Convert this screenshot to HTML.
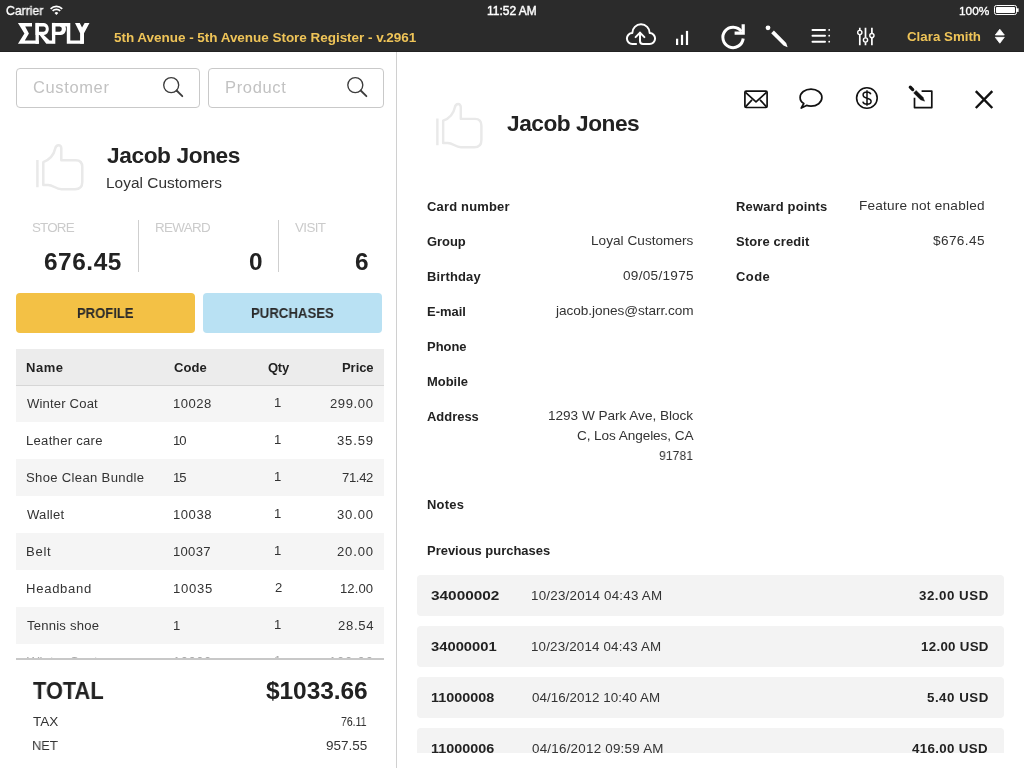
<!DOCTYPE html>
<html><head><meta charset="utf-8">
<style>
html,body{margin:0;padding:0;}
body{width:1024px;height:768px;overflow:hidden;position:relative;background:#fff;font-family:"Liberation Sans",sans-serif;}
.t{position:absolute;white-space:nowrap;will-change:transform;}
.clip{position:absolute;left:0;top:0;width:1024px;overflow:hidden;}
.b{position:absolute;box-sizing:border-box;}
svg{position:absolute;left:0;top:0;}
</style></head><body>
<!-- header -->
<div class="b" style="left:0;top:0;width:1024px;height:52px;background:#2b2b2b"></div>
<div class="b" style="left:0;top:51px;width:1024px;height:1px;background:#222"></div>
<!-- divider -->
<div class="b" style="left:396px;top:52px;width:1px;height:716px;background:#d0d0d0"></div>
<!-- search boxes -->
<div class="b" style="left:16px;top:68px;width:184px;height:40px;border:1px solid #c9c9c9;border-radius:4px"></div>
<div class="b" style="left:208px;top:68px;width:176px;height:40px;border:1px solid #c9c9c9;border-radius:4px"></div>
<!-- stat dividers -->
<div class="b" style="left:138px;top:220px;width:1px;height:52px;background:#cfcfcf"></div>
<div class="b" style="left:278px;top:220px;width:1px;height:52px;background:#cfcfcf"></div>
<!-- buttons -->
<div class="b" style="left:16px;top:293px;width:179px;height:40px;background:#f3c145;border-radius:4px"></div>
<div class="b" style="left:203px;top:293px;width:179px;height:40px;background:#b9e1f3;border-radius:4px"></div>
<!-- table -->
<div class="b" style="left:16px;top:349px;width:368px;height:36px;background:#ececec"></div>
<div class="b" style="left:16px;top:385px;width:368px;height:1px;background:#d6d6d6"></div>
<div class="b" style="left:16px;top:386px;width:368px;height:36px;background:#f5f5f5"></div>
<div class="b" style="left:16px;top:459px;width:368px;height:37px;background:#f5f5f5"></div>
<div class="b" style="left:16px;top:533px;width:368px;height:37px;background:#f5f5f5"></div>
<div class="b" style="left:16px;top:607px;width:368px;height:37px;background:#f5f5f5"></div>
<div class="b" style="left:16px;top:658px;width:368px;height:2px;background:#c8c8c8"></div>
<!-- purchases rows -->
<div class="b" style="left:417px;top:575px;width:587px;height:41px;background:#f3f3f3;border-radius:4px"></div>
<div class="b" style="left:417px;top:626px;width:587px;height:41px;background:#f3f3f3;border-radius:4px"></div>
<div class="b" style="left:417px;top:677px;width:587px;height:41px;background:#f3f3f3;border-radius:4px"></div>
<div style="position:absolute;left:0;top:0;width:1024px;height:753px;overflow:hidden">
<div class="b" style="left:417px;top:728px;width:587px;height:41px;background:#f3f3f3;border-radius:4px"></div>
</div>
<div class="t" style="left:6.00px;top:4px;font-size:12.4px;line-height:15px;color:#fff;-webkit-text-stroke:0.35px #fff;transform:scaleX(0.9877);transform-origin:0 0;">Carrier</div>
<div class="t" style="left:487.40px;top:4px;font-size:12.0px;line-height:15px;color:#fff;-webkit-text-stroke:0.45px #fff;transform:scaleX(0.9981);transform-origin:0 0;">11:52 AM</div>
<div class="t" style="left:959.00px;top:4px;font-size:11.8px;line-height:15px;color:#fff;-webkit-text-stroke:0.35px #fff;transform:scaleX(1.0038);transform-origin:0 0;">100%</div>
<div class="t" style="left:113.60px;top:29px;font-size:13.5px;line-height:17px;color:#efc458;font-weight:bold;letter-spacing:-0.034px;">5th Avenue - 5th Avenue Store Register - v.2961</div>
<div class="t" style="left:906.80px;top:29px;font-size:13.3px;line-height:16px;color:#efc458;font-weight:bold;letter-spacing:0.010px;">Clara Smith</div>
<div class="t" style="left:33.20px;top:77px;font-size:16.5px;line-height:20px;color:#c2c2c2;letter-spacing:0.629px;">Customer</div>
<div class="t" style="left:224.60px;top:77px;font-size:16.5px;line-height:20px;color:#c2c2c2;letter-spacing:0.666px;">Product</div>
<div class="t" style="left:106.80px;top:141px;font-size:22.7px;line-height:28px;color:#222;font-weight:bold;letter-spacing:-0.400px;">Jacob Jones</div>
<div class="t" style="left:105.80px;top:173px;font-size:15.4px;line-height:19px;color:#333;letter-spacing:0.036px;">Loyal Customers</div>
<div class="t" style="left:31.80px;top:219px;font-size:13.4px;line-height:17px;color:#cbcbcb;letter-spacing:-0.825px;">STORE</div>
<div class="t" style="left:154.60px;top:219px;font-size:13.4px;line-height:17px;color:#cbcbcb;letter-spacing:-0.680px;">REWARD</div>
<div class="t" style="left:295.00px;top:219px;font-size:13.4px;line-height:17px;color:#cbcbcb;letter-spacing:-0.625px;">VISIT</div>
<div class="t" style="left:43.88px;top:247px;font-size:24.4px;line-height:30px;color:#222;font-weight:bold;letter-spacing:0.560px;">676.45</div>
<div class="t" style="left:248.78px;top:247px;font-size:24.4px;line-height:30px;color:#222;font-weight:bold;">0</div>
<div class="t" style="left:354.58px;top:247px;font-size:24.4px;line-height:30px;color:#222;font-weight:bold;">6</div>
<div class="t" style="left:77.00px;top:305px;font-size:14.0px;line-height:17px;color:#2a2a2a;font-weight:bold;transform:scaleX(0.9322);transform-origin:0 0;">PROFILE</div>
<div class="t" style="left:250.80px;top:305px;font-size:14.0px;line-height:17px;color:#2a2a2a;font-weight:bold;transform:scaleX(0.9419);transform-origin:0 0;">PURCHASES</div>
<div class="t" style="left:25.80px;top:360px;font-size:13.0px;line-height:16px;color:#222;font-weight:bold;letter-spacing:0.533px;">Name</div>
<div class="t" style="left:174.40px;top:360px;font-size:13.0px;line-height:16px;color:#222;font-weight:bold;letter-spacing:0.100px;">Code</div>
<div class="t" style="left:268.20px;top:360px;font-size:13.0px;line-height:16px;color:#222;font-weight:bold;letter-spacing:-0.250px;">Qty</div>
<div class="t" style="left:342.25px;top:360px;font-size:13.0px;line-height:16px;color:#222;font-weight:bold;letter-spacing:-0.050px;">Price</div>
<div class="t" style="left:26.80px;top:396px;font-size:13.08px;line-height:16px;color:#333;letter-spacing:0.170px;">Winter Coat</div>
<div class="t" style="left:173.40px;top:396px;font-size:13.08px;line-height:16px;color:#333;letter-spacing:0.450px;">10028</div>
<div class="t" style="left:274.40px;top:395px;font-size:13.08px;line-height:16px;color:#333;">1</div>
<div class="t" style="left:329.84px;top:396px;font-size:13.08px;line-height:16px;color:#333;letter-spacing:0.580px;">299.00</div>
<div class="t" style="left:25.80px;top:433px;font-size:13.08px;line-height:16px;color:#333;letter-spacing:0.282px;">Leather care</div>
<div class="t" style="left:173.40px;top:433px;font-size:13.08px;line-height:16px;color:#333;letter-spacing:-1.100px;">10</div>
<div class="t" style="left:274.40px;top:432px;font-size:13.08px;line-height:16px;color:#333;">1</div>
<div class="t" style="left:337.03px;top:433px;font-size:13.08px;line-height:16px;color:#333;letter-spacing:0.825px;">35.59</div>
<div class="t" style="left:25.80px;top:470px;font-size:13.08px;line-height:16px;color:#333;letter-spacing:0.331px;">Shoe Clean Bundle</div>
<div class="t" style="left:173.40px;top:470px;font-size:13.08px;line-height:16px;color:#333;letter-spacing:-0.900px;">15</div>
<div class="t" style="left:274.40px;top:469px;font-size:13.08px;line-height:16px;color:#333;">1</div>
<div class="t" style="left:342.03px;top:470px;font-size:13.08px;line-height:16px;color:#333;letter-spacing:-0.350px;">71.42</div>
<div class="t" style="left:26.80px;top:507px;font-size:13.08px;line-height:16px;color:#333;letter-spacing:0.260px;">Wallet</div>
<div class="t" style="left:173.40px;top:507px;font-size:13.08px;line-height:16px;color:#333;letter-spacing:0.525px;">10038</div>
<div class="t" style="left:274.40px;top:506px;font-size:13.08px;line-height:16px;color:#333;">1</div>
<div class="t" style="left:337.03px;top:507px;font-size:13.08px;line-height:16px;color:#333;letter-spacing:0.825px;">30.00</div>
<div class="t" style="left:25.80px;top:544px;font-size:13.08px;line-height:16px;color:#333;letter-spacing:0.733px;">Belt</div>
<div class="t" style="left:173.40px;top:544px;font-size:13.08px;line-height:16px;color:#333;letter-spacing:0.275px;">10037</div>
<div class="t" style="left:274.40px;top:543px;font-size:13.08px;line-height:16px;color:#333;">1</div>
<div class="t" style="left:337.03px;top:544px;font-size:13.08px;line-height:16px;color:#333;letter-spacing:0.825px;">20.00</div>
<div class="t" style="left:25.80px;top:581px;font-size:13.08px;line-height:16px;color:#333;letter-spacing:0.714px;">Headband</div>
<div class="t" style="left:173.40px;top:581px;font-size:13.08px;line-height:16px;color:#333;letter-spacing:0.700px;">10035</div>
<div class="t" style="left:274.90px;top:580px;font-size:13.08px;line-height:16px;color:#333;">2</div>
<div class="t" style="left:340.03px;top:581px;font-size:13.08px;line-height:16px;color:#333;letter-spacing:0.100px;">12.00</div>
<div class="t" style="left:26.80px;top:618px;font-size:13.08px;line-height:16px;color:#333;letter-spacing:0.220px;">Tennis shoe</div>
<div class="t" style="left:173.40px;top:618px;font-size:13.08px;line-height:16px;color:#333;">1</div>
<div class="t" style="left:274.40px;top:617px;font-size:13.08px;line-height:16px;color:#333;">1</div>
<div class="t" style="left:338.03px;top:618px;font-size:13.08px;line-height:16px;color:#333;letter-spacing:0.725px;">28.54</div>
<div class="clip" style="height:658px"><div class="t" style="left:26.80px;top:654px;font-size:13.08px;line-height:16px;color:#aaa;letter-spacing:0.170px;">Winter Coat</div></div>
<div class="clip" style="height:658px"><div class="t" style="left:173.40px;top:654px;font-size:13.08px;line-height:16px;color:#aaa;letter-spacing:0.450px;">10000</div></div>
<div class="clip" style="height:658px"><div class="t" style="left:274.40px;top:653px;font-size:13.08px;line-height:16px;color:#aaa;">1</div></div>
<div class="clip" style="height:658px"><div class="t" style="left:328.84px;top:654px;font-size:13.08px;line-height:16px;color:#aaa;letter-spacing:0.780px;">100.00</div></div>
<div class="t" style="left:32.80px;top:676px;font-size:24.3px;line-height:30px;color:#222;font-weight:bold;transform:scaleX(0.8962);transform-origin:0 0;">TOTAL</div>
<div class="t" style="left:265.80px;top:676px;font-size:24.5px;line-height:30px;color:#222;font-weight:bold;letter-spacing:-0.072px;">$1033.66</div>
<div class="t" style="left:32.80px;top:713px;font-size:13.5px;line-height:17px;color:#333;transform:scaleX(0.9842);transform-origin:0 0;">TAX</div>
<div class="t" style="left:31.80px;top:737px;font-size:13.5px;line-height:17px;color:#333;transform:scaleX(0.9463);transform-origin:0 0;">NET</div>
<div class="t" style="left:341.47px;top:713px;font-size:13.5px;line-height:17px;color:#333;transform:scaleX(0.7756);transform-origin:0 0;">76.11</div>
<div class="t" style="left:326.05px;top:737px;font-size:13.5px;line-height:17px;color:#333;letter-spacing:-0.020px;">957.55</div>
<div class="t" style="left:506.80px;top:109px;font-size:22.7px;line-height:28px;color:#222;font-weight:bold;letter-spacing:-0.480px;">Jacob Jones</div>
<div class="t" style="left:427.00px;top:199px;font-size:12.94px;line-height:16px;color:#222;font-weight:bold;letter-spacing:0.200px;">Card number</div>
<div class="t" style="left:427.00px;top:234px;font-size:12.94px;line-height:16px;color:#222;font-weight:bold;letter-spacing:-0.025px;">Group</div>
<div class="t" style="left:427.00px;top:269px;font-size:12.94px;line-height:16px;color:#222;font-weight:bold;letter-spacing:0.157px;">Birthday</div>
<div class="t" style="left:427.00px;top:304px;font-size:12.94px;line-height:16px;color:#222;font-weight:bold;">E-mail</div>
<div class="t" style="left:427.00px;top:339px;font-size:12.94px;line-height:16px;color:#222;font-weight:bold;">Phone</div>
<div class="t" style="left:427.00px;top:374px;font-size:12.94px;line-height:16px;color:#222;font-weight:bold;">Mobile</div>
<div class="t" style="left:427.00px;top:409px;font-size:12.94px;line-height:16px;color:#222;font-weight:bold;">Address</div>
<div class="t" style="left:427.00px;top:497px;font-size:12.94px;line-height:16px;color:#222;font-weight:bold;letter-spacing:0.250px;">Notes</div>
<div class="t" style="left:427.00px;top:543px;font-size:12.94px;line-height:16px;color:#222;font-weight:bold;letter-spacing:0.013px;">Previous purchases</div>
<div class="t" style="left:735.60px;top:199px;font-size:12.94px;line-height:16px;color:#222;font-weight:bold;letter-spacing:0.175px;">Reward points</div>
<div class="t" style="left:735.60px;top:234px;font-size:12.94px;line-height:16px;color:#222;font-weight:bold;letter-spacing:0.136px;">Store credit</div>
<div class="t" style="left:735.60px;top:269px;font-size:12.94px;line-height:16px;color:#222;font-weight:bold;letter-spacing:0.467px;">Code</div>
<div class="t" style="left:591.20px;top:232px;font-size:13.6px;line-height:17px;color:#333;letter-spacing:0.029px;">Loyal Customers</div>
<div class="t" style="left:622.60px;top:267px;font-size:13.6px;line-height:17px;color:#333;letter-spacing:0.288px;">09/05/1975</div>
<div class="t" style="left:556.32px;top:302px;font-size:13.6px;line-height:17px;color:#333;letter-spacing:-0.045px;">jacob.jones@starr.com</div>
<div class="t" style="left:548.04px;top:407px;font-size:13.6px;line-height:17px;color:#333;letter-spacing:-0.024px;">1293 W Park Ave, Block</div>
<div class="t" style="left:576.96px;top:427px;font-size:13.6px;line-height:17px;color:#333;letter-spacing:-0.082px;">C, Los Angeles, CA</div>
<div class="t" style="left:659.20px;top:447px;font-size:13.6px;line-height:17px;color:#333;transform:scaleX(0.9001);transform-origin:0 0;">91781</div>
<div class="t" style="left:859.48px;top:197px;font-size:13.6px;line-height:17px;color:#333;letter-spacing:0.211px;">Feature not enabled</div>
<div class="t" style="left:933.24px;top:232px;font-size:13.6px;line-height:17px;color:#333;letter-spacing:0.383px;">$676.45</div>
<div class="t" style="left:431.20px;top:588px;font-size:13.3px;line-height:16px;color:#222;font-weight:bold;transform:scaleX(1.1552);transform-origin:0 0;">34000002</div>
<div class="t" style="left:531.20px;top:587px;font-size:13.37px;line-height:17px;color:#333;letter-spacing:0.223px;">10/23/2014 04:43 AM</div>
<div class="t" style="left:918.76px;top:588px;font-size:13.3px;line-height:16px;color:#222;font-weight:bold;letter-spacing:0.525px;">32.00 USD</div>
<div class="t" style="left:431.20px;top:639px;font-size:13.3px;line-height:16px;color:#222;font-weight:bold;transform:scaleX(1.1104);transform-origin:0 0;">34000001</div>
<div class="t" style="left:531.20px;top:638px;font-size:13.37px;line-height:17px;color:#333;letter-spacing:0.172px;">10/23/2014 04:43 AM</div>
<div class="t" style="left:920.76px;top:639px;font-size:13.3px;line-height:16px;color:#222;font-weight:bold;letter-spacing:0.300px;">12.00 USD</div>
<div class="t" style="left:431.20px;top:690px;font-size:13.3px;line-height:16px;color:#222;font-weight:bold;transform:scaleX(1.0808);transform-origin:0 0;">11000008</div>
<div class="t" style="left:532.20px;top:689px;font-size:13.37px;line-height:17px;color:#333;letter-spacing:0.056px;">04/16/2012 10:40 AM</div>
<div class="t" style="left:927.08px;top:690px;font-size:13.3px;line-height:16px;color:#222;font-weight:bold;letter-spacing:0.515px;">5.40 USD</div>
<div class="clip" style="height:752.7px"><div class="t" style="left:431.20px;top:741px;font-size:13.3px;line-height:16px;color:#222;font-weight:bold;transform:scaleX(1.0808);transform-origin:0 0;">11000006</div></div>
<div class="clip" style="height:752.7px"><div class="t" style="left:532.20px;top:740px;font-size:13.37px;line-height:17px;color:#333;letter-spacing:0.245px;">04/16/2012 09:59 AM</div></div>
<div class="clip" style="height:752.7px"><div class="t" style="left:912.45px;top:741px;font-size:13.3px;line-height:16px;color:#222;font-weight:bold;letter-spacing:0.345px;">416.00 USD</div></div>
<svg width="1024" height="768" viewBox="0 0 1024 768">
<!-- wifi -->
<g fill="#fff">
  <path d="M56.4 15 L49.9 8.5 A9.2 9.2 0 0 1 62.9 8.5 Z M56.4 15 L53.5 12.1 A4.1 4.1 0 0 1 59.3 12.1 Z" opacity="0"/>
</g>
<g fill="none" stroke="#fff" stroke-width="1.7">
  <path d="M50.6 8.8 A8.3 8.3 0 0 1 62.2 8.8"/>
  <path d="M52.6 10.9 A5.4 5.4 0 0 1 60.2 10.9"/>
</g>
<path d="M54.5 12.9 A2.7 2.7 0 0 1 58.3 12.9 L56.4 14.9 Z" fill="#fff"/>
<!-- battery -->
<rect x="994.5" y="5.5" width="22" height="9" rx="1.8" fill="none" stroke="#fff" stroke-width="1"/>
<rect x="996" y="7" width="19" height="6" rx="0.8" fill="#fff"/>
<rect x="1017" y="8.3" width="1.6" height="3.6" fill="#fff"/>
<!-- ERPLY logo -->
<g fill="#fff" fill-rule="evenodd">
  <path d="M17.95 22.9 H32 V26.4 H25.2 L28.9 33.5 L24.8 40.5 H38.85 V43.8 H17.95 L24.4 33.5 Z"/>
  <path d="M35.5 22.9 H38.85 V43.8 H35.5 Z"/>
  <path d="M35.5 22.9 H44 A4.8 6.05 0 0 1 44 35 H35.5 Z M38.85 26.4 H43.6 A2.2 2.65 0 0 1 43.6 31.7 H38.85 Z"/>
  <path d="M39.6 35 H43.8 L49.6 40.5 H52 V43.8 H46.3 Z"/>
  <path d="M51.95 22.9 H55.3 V43.8 H51.95 Z"/>
  <path d="M51.95 22.9 H61 A5 6.05 0 0 1 61 35 H51.95 Z M55.3 26.4 H59.6 A2.2 2.65 0 0 1 59.6 31.7 H55.3 Z"/>
  <path d="M60 22.9 H70.3 V40.5 H83.6 V43.8 H66.8 V26.4 H60 Z"/>
  <path d="M75 22.9 H79.8 L82.05 27.6 L84.6 22.9 H89.5 L84 33.3 V43.8 H80.1 V33.3 Z"/>
</g>
<!-- cloud upload -->
<g fill="none" stroke="#fff" stroke-width="2" stroke-linecap="round" stroke-linejoin="round">
  <path d="M636.1 44 H632.5 A5.5 5.5 0 0 1 632.3 33 A8.7 8.7 0 0 1 649.7 33 A5.5 5.5 0 0 1 649.5 44 H643 Q640 44 640 41 V32.8"/>
  <path d="M635.6 37.1 L640 32.6 L644.4 37.1"/>
</g>
<!-- bars -->
<g fill="#fff">
  <rect x="676" y="38.7" width="2.2" height="6.3"/>
  <rect x="680.9" y="34.8" width="2.2" height="10.2"/>
  <rect x="685.9" y="30.9" width="2.2" height="14.1"/>
</g>
<!-- refresh -->
<g fill="none" stroke="#fff" stroke-width="3">
  <path d="M743.2 38.5 A10.2 10.2 0 1 1 741.4 31.5"/>
</g>
<path d="M741.6 24.2 H744.8 V34.8 H734.6 V31.6 H741.6 Z" fill="#fff"/>
<!-- pencil -->
<circle cx="768" cy="27.8" r="2.4" fill="#fff"/>
<path d="M771.2 33.3 L773.9 30.6 L786.2 42.9 L787.6 47.3 L783.5 45.6 Z" fill="#fff"/>
<!-- list -->
<g stroke="#fff" stroke-width="2" stroke-linecap="round">
  <path d="M812.5 29.9 H825 M812.5 35.7 H825 M812.5 41.7 H825"/>
</g>
<g fill="#fff">
  <circle cx="829.2" cy="29.9" r="0.9"/><circle cx="829.2" cy="35.7" r="0.9"/><circle cx="829.2" cy="41.7" r="0.9"/>
</g>
<!-- sliders -->
<g stroke="#fff" stroke-width="1.7">
  <path d="M859.8 27.7 V30.3 M859.8 34.7 V45.2 M865.5 27.7 V37.8 M865.5 42.2 V45.2 M871.9 27.7 V33.4 M871.9 37.8 V45.2"/>
</g>
<g fill="none" stroke="#fff" stroke-width="1.4">
  <circle cx="859.8" cy="32.5" r="2.1"/><circle cx="865.5" cy="40" r="2.1"/><circle cx="871.9" cy="35.6" r="2.1"/>
</g>
<!-- up/down -->
<g fill="#fff" stroke="#fff" stroke-width="0.8" stroke-linejoin="round">
  <path d="M995.3 35 L999.8 29.2 L1004.3 35 Z"/>
  <path d="M995.3 37.3 L999.8 43.2 L1004.3 37.3 Z"/>
</g>
<!-- search icons -->
<g fill="none" stroke="#3c3c3c" stroke-width="1.35">
  <circle cx="171.2" cy="85.1" r="7.5"/><circle cx="355.3" cy="85.1" r="7.5"/>
</g>
<g fill="none" stroke="#3c3c3c" stroke-width="1.8" stroke-linecap="round">
  <path d="M176.6 90.5 L182.3 96.2"/><path d="M360.7 90.5 L366.4 96.2"/>
</g>
<!-- thumbs -->
<g fill="none" stroke="#e9e9e9" stroke-width="2.5" stroke-linejoin="round">
  <path d="M37.4 160 V187.2 M43.3 184.9 V162.2 C50 159.5 54 154.5 55.2 148.6 C56 144.2 61.3 143.8 61.3 148.6 V160.3 H75.8 Q82.3 160.3 82.3 167.2 V182 Q82.3 189.2 75 189.2 H61.5 C55.5 189.2 53.5 184.9 48 184.9 Z"/>
  <path transform="translate(436.4 102.9) scale(0.98) translate(-36.4 -144)" d="M37.4 160 V187.2 M43.3 184.9 V162.2 C50 159.5 54 154.5 55.2 148.6 C56 144.2 61.3 143.8 61.3 148.6 V160.3 H75.8 Q82.3 160.3 82.3 167.2 V182 Q82.3 189.2 75 189.2 H61.5 C55.5 189.2 53.5 184.9 48 184.9 Z"/>
</g>
<!-- envelope -->
<g fill="none" stroke="#111" stroke-width="1.7" stroke-linejoin="round">
  <rect x="744.9" y="91.1" width="22.2" height="16.4" rx="1.2"/>
  <path d="M745.5 92.3 L756 101.8 L766.5 92.3 M745.5 106.8 L752 99.8 M766.5 106.8 L760 99.8"/>
</g>
<!-- bubble -->
<path d="M803.8 103.5 C800.8 101.9 800.1 99.5 800.1 97.6 C800.1 92.6 805 89.1 811 89.1 C817 89.1 821.9 92.6 821.9 97.6 C821.9 102.6 817 106.1 811 106.1 C809.4 106.1 807.9 105.9 806.5 105.4 L801.3 108 Z" fill="none" stroke="#111" stroke-width="1.7" stroke-linejoin="round"/>
<!-- dollar -->
<circle cx="866.9" cy="98" r="10.3" fill="none" stroke="#111" stroke-width="1.6"/>
<path d="M870.8 94.3 C870.3 92.8 869 92 867 92 C864.6 92 863.1 93.3 863.1 95 C863.1 99.3 871.1 97.3 871.1 101.3 C871.1 103.1 869.4 104.3 867 104.3 C864.7 104.3 863.3 103.3 862.8 101.6 M867 90.3 V105.7" fill="none" stroke="#111" stroke-width="1.5"/>
<!-- edit -->
<path d="M921.6 91.1 H931.8 V107.6 H914.5 V97.8" fill="none" stroke="#111" stroke-width="1.7" stroke-linejoin="round"/>
<path d="M910.3 87.2 L912.7 89.6" stroke="#111" stroke-width="3.3" stroke-linecap="round"/>
<path d="M913.6 92.9 L916.1 90.4 L923 97.3 L924.6 101.2 L920.5 99.8 Z" fill="#111" stroke="#111" stroke-width="0.4" stroke-linejoin="round"/>
<!-- close -->
<path d="M975.8 91.1 L992.3 108 M992.3 91.1 L975.8 108" stroke="#111" stroke-width="2.4"/>
</svg>
</body></html>
